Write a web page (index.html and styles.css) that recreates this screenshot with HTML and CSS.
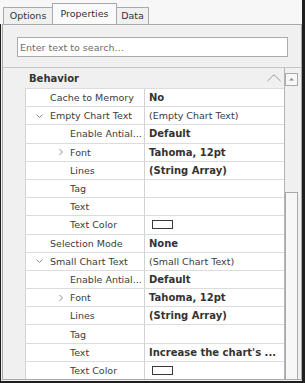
FILE: index.html
```html
<!DOCTYPE html>
<html>
<head>
<meta charset="utf-8">
<link rel="stylesheet" href="styles.css">
</head>
<body>
<div class="window">
  <div class="tabs">
    <div class="tab tab-first">Options</div>
    <div class="tab tab-active">Properties</div>
    <div class="tab tab-last">Data</div>
  </div>
  <div class="page">
    <div class="panel">
      <div class="search-area">
        <input class="search" type="text" placeholder="Enter text to search…">
      </div>
      <div class="grid">
        <div class="grid-main">
          <div class="category">
            <span>Behavior</span>
            <svg class="cat-chev" width="14" height="8" viewBox="0 0 14 8"><path d="M0.5 7 L7 0.8 L13.5 7"/></svg>
          </div>

          <div class="row"><div class="mg"></div><div class="nm l1"><span class="tw"></span>Cache to Memory</div><div class="vl b">No</div></div>
          <div class="row"><div class="mg"></div><div class="nm l1"><svg class="tw" width="14" height="8" viewBox="0 0 14 8"><path d="M0.5 2.5 L3.5 5.5 L6.5 2.5"/></svg>Empty Chart Text</div><div class="vl">(Empty Chart Text)</div></div>
          <div class="row"><div class="mg"></div><div class="nm l2"><span class="tw"></span>Enable Antial...</div><div class="vl b">Default</div></div>
          <div class="row"><div class="mg"></div><div class="nm l2"><svg class="tw" width="14" height="8" viewBox="0 0 14 8"><path d="M3.5 1 L6.5 4 L3.5 7"/></svg>Font</div><div class="vl b">Tahoma, 12pt</div></div>
          <div class="row"><div class="mg"></div><div class="nm l2"><span class="tw"></span>Lines</div><div class="vl b">(String Array)</div></div>
          <div class="row"><div class="mg"></div><div class="nm l2"><span class="tw"></span>Tag</div><div class="vl"></div></div>
          <div class="row"><div class="mg"></div><div class="nm l2"><span class="tw"></span>Text</div><div class="vl"></div></div>
          <div class="row"><div class="mg"></div><div class="nm l2"><span class="tw"></span>Text Color</div><div class="vl"><span class="swatch"></span></div></div>
          <div class="row"><div class="mg"></div><div class="nm l1"><span class="tw"></span>Selection Mode</div><div class="vl b">None</div></div>
          <div class="row"><div class="mg"></div><div class="nm l1"><svg class="tw" width="14" height="8" viewBox="0 0 14 8"><path d="M0.5 2.5 L3.5 5.5 L6.5 2.5"/></svg>Small Chart Text</div><div class="vl">(Small Chart Text)</div></div>
          <div class="row"><div class="mg"></div><div class="nm l2"><span class="tw"></span>Enable Antial...</div><div class="vl b">Default</div></div>
          <div class="row"><div class="mg"></div><div class="nm l2"><svg class="tw" width="14" height="8" viewBox="0 0 14 8"><path d="M3.5 1 L6.5 4 L3.5 7"/></svg>Font</div><div class="vl b">Tahoma, 12pt</div></div>
          <div class="row"><div class="mg"></div><div class="nm l2"><span class="tw"></span>Lines</div><div class="vl b">(String Array)</div></div>
          <div class="row"><div class="mg"></div><div class="nm l2"><span class="tw"></span>Tag</div><div class="vl"></div></div>
          <div class="row"><div class="mg"></div><div class="nm l2"><span class="tw"></span>Text</div><div class="vl b">Increase the chart's ...</div></div>
          <div class="row"><div class="mg"></div><div class="nm l2"><span class="tw"></span>Text Color</div><div class="vl"><span class="swatch"></span></div></div>
        </div>
        <div class="scrollbar">
          <div class="sb-btn">
            <svg width="11" height="11" viewBox="0 0 11 11"><path d="M3 6.5 L5.5 4 L8 6.5 Z"/></svg>
          </div>
          <div class="sb-thumb"></div>
        </div>
      </div>
    </div>
  </div>
</div>
</body>
</html>
```

FILE: styles.css
```css
* {
  box-sizing: border-box;
}

html,
body {
  margin: 0;
  padding: 0;
}

body {
  width: 305px;
  height: 383px;
  overflow: hidden;
  background: #f7f7f7;
  font-family: "DejaVu Sans", sans-serif;
  font-size: 9.5px;
  color: #3c3c3c;
}

.window {
  width: 305px;
  height: 383px;
  display: flex;
  flex-direction: column;
  border-right: 3px solid #1f1f1f;
}

/* ---------- tabs ---------- */
.tabs {
  flex: none;
  height: 24px;
  display: flex;
  align-items: flex-end;
  padding-left: 3px;
}

.tab {
  display: flex;
  align-items: center;
  justify-content: center;
  height: 17px;
  line-height: 1;
  color: #333;
  background: #f0f0f0;
  border-top: 1px solid #a9a9a9;
}

.tab-first {
  width: 49px;
  border-left: 1px solid #a9a9a9;
}

.tab-active {
  width: 65px;
  height: 21px;
  padding-bottom: 1px;
  background: #fafafa;
  border-left: 1px solid #a9a9a9;
  border-right: 1px solid #a9a9a9;
}

.tab-last {
  width: 32px;
  border-right: 1px solid #a9a9a9;
}

/* ---------- page ---------- */
.page {
  flex: 1;
  min-height: 0;
  display: flex;
  padding: 0 0 1px 1px;
  background: #f0f0f0;
  border-left: 1px solid #1f1f1f;
  border-bottom: 2px solid #1f1f1f;
}

.panel {
  flex: 1;
  min-width: 0;
  display: flex;
  flex-direction: column;
  background: #f0f0f0;
  border: 1px solid #a9a9a9;
}

.search-area {
  flex: none;
  height: 42px;
  padding: 12px 13px 10px 14px;
}

.search {
  display: block;
  width: 100%;
  height: 20px;
  margin: 0;
  padding: 0 2px;
  border: 1px solid #ababab;
  background: #fff;
  font-family: inherit;
  font-size: 9.5px;
  color: #333;
  outline: none;
}

.search::placeholder {
  color: #6d6d6d;
  opacity: 1;
}

/* ---------- grid ---------- */
.grid {
  flex: 1;
  min-height: 0;
  display: flex;
  overflow: hidden;
  border-top: 1px solid #c6c6c6;
}

.grid-main {
  width: 282px;
  flex: none;
  background: #fff;
  border-right: 1px solid #b4b4b4;
}

.category {
  height: 20px;
  display: flex;
  align-items: center;
  justify-content: space-between;
  padding: 0 3px 0 26px;
  background: #f0f0f0;
  font-weight: bold;
  font-size: 10px;
  color: #333;
}

.cat-chev path {
  fill: none;
  stroke: #9a9a9a;
  stroke-width: 1;
}

.row {
  display: grid;
  grid-template-columns: 22px 120px 1fr;
  height: 18.2px;
}

.mg {
  background: #f0f0f0;
}

.nm {
  display: flex;
  align-items: center;
  white-space: nowrap;
  overflow: hidden;
  border-top: 1px solid #dcdcdc;
  border-left: 1px solid #d2d2d2;
  border-right: 1px solid #d2d2d2;
}

.l1 {
  padding-left: 10px;
}

.l2 {
  padding-left: 30px;
}

.tw {
  flex: none;
  display: block;
  width: 14px;
  height: 8px;
}

.tw path {
  fill: none;
  stroke: #8c8c8c;
  stroke-width: 1;
}

.vl {
  display: flex;
  align-items: center;
  padding-left: 4px;
  white-space: nowrap;
  overflow: hidden;
  border-top: 1px solid #dcdcdc;
}

.b {
  font-weight: bold;
  font-size: 10px;
  color: #333;
}

.swatch {
  display: block;
  width: 21px;
  height: 9px;
  margin-left: 3px;
  background: #fff;
  border: 1px solid #3a3a3a;
}

/* ---------- scrollbar ---------- */
.scrollbar {
  flex: 1;
  display: flex;
  flex-direction: column;
  background: #f0f0f0;
  padding-top: 5px;
}

.sb-btn {
  width: 13px;
  height: 13px;
  display: flex;
  align-items: center;
  justify-content: center;
  background: #f7f7f7;
  border: 1px solid #a9a9a9;
}

.sb-btn path {
  fill: #8a8a8a;
}

.sb-thumb {
  width: 13px;
  flex: 1;
  margin-top: 106px;
  background: #f7f7f7;
  border: 1px solid #a9a9a9;
  border-bottom: none;
}
```
